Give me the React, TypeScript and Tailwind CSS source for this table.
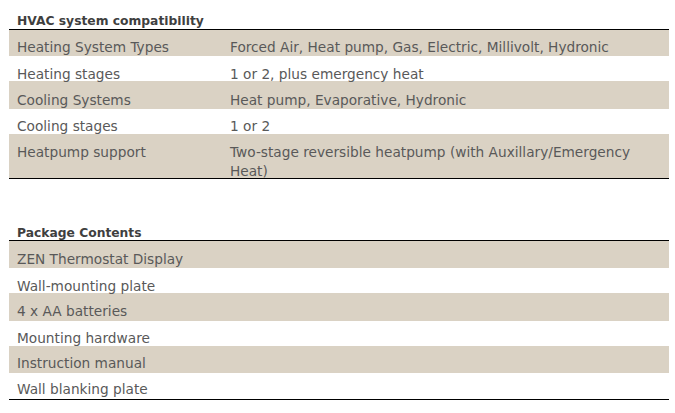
import React from 'react';

type Row = { label: string; value?: string; h: string; pt: string };

const hvacRows: Row[] = [
  { label: 'Heating System Types', value: 'Forced Air, Heat pump, Gas, Electric, Millivolt, Hydronic', h: 'h-[26px]', pt: 'pt-[8px]' },
  { label: 'Heating stages', value: '1 or 2, plus emergency heat', h: 'h-[25px]', pt: 'pt-[9px]' },
  { label: 'Cooling Systems', value: 'Heat pump, Evaporative, Hydronic', h: 'h-[28px]', pt: 'pt-[10px]' },
  { label: 'Cooling stages', value: '1 or 2', h: 'h-[25px]', pt: 'pt-[8px]' },
  { label: 'Heatpump support', value: 'Two-stage reversible heatpump (with Auxillary/Emergency Heat)', h: 'h-[44px]', pt: 'pt-[9px]' },
];

const packageRows: Row[] = [
  { label: 'ZEN Thermostat Display', h: 'h-[27px]', pt: 'pt-[9px]' },
  { label: 'Wall-mounting plate', h: 'h-[25px]', pt: 'pt-[9px]' },
  { label: '4 x AA batteries', h: 'h-[28px]', pt: 'pt-[9px]' },
  { label: 'Mounting hardware', h: 'h-[25px]', pt: 'pt-[8px]' },
  { label: 'Instruction manual', h: 'h-[27px]', pt: 'pt-[8px]' },
  { label: 'Wall blanking plate', h: 'h-[26px]', pt: 'pt-[7px]' },
];

const SpecTable: React.FC<{ rows: Row[] }> = ({ rows }) => (
  <div className="w-[660px] ml-[9px] border-t border-b border-black">
    {rows.map((row, i) => (
      <div
        key={row.label}
        className={`flex ${row.h} ${row.pt} leading-[18px] ${i % 2 === 0 ? 'bg-[#dad2c4]' : 'bg-white'}`}
      >
        <div className="w-[221px] shrink-0 pl-[8px]">{row.label}</div>
        {row.value && <div className="w-[420px] leading-[18.5px]">{row.value}</div>}
      </div>
    ))}
  </div>
);

export default function App() {
  return (
    <div className="w-[675px] h-[413px] bg-white text-[13.7px] text-[#595959] font-['DejaVu_Sans',sans-serif]">
      <div className="h-[29px] pt-[13px] pl-[17px] text-[12.3px] leading-[16px] font-bold text-[#3f3f3f]">
        HVAC system compatibility
      </div>
      <SpecTable rows={hvacRows} />
      <div className="h-[61px] pt-[46px] pl-[17px] text-[12.3px] leading-[16px] font-bold text-[#3f3f3f]">
        Package Contents
      </div>
      <SpecTable rows={packageRows} />
    </div>
  );
}
